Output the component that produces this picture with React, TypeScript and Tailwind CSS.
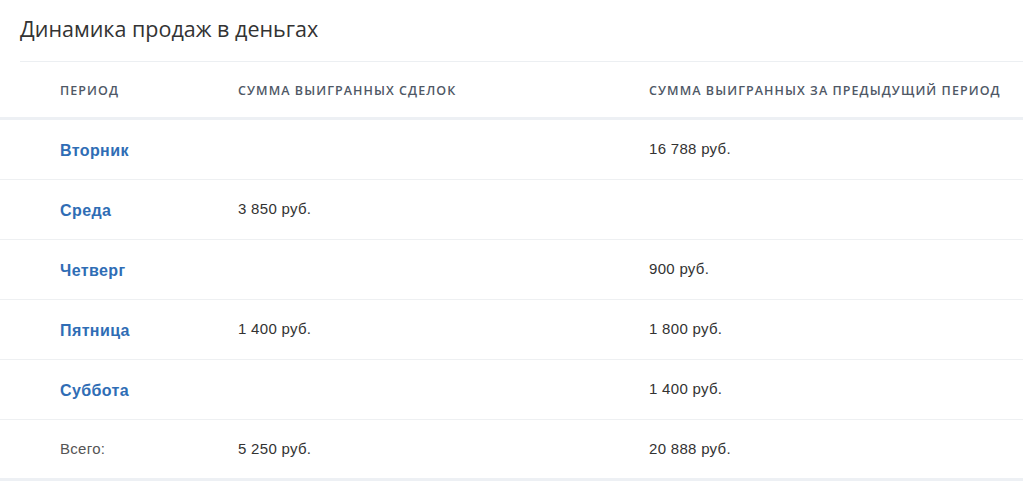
const rows = [
  { period: 'Вторник', current: '', previous: '16 788 руб.' },
  { period: 'Среда', current: '3 850 руб.', previous: '' },
  { period: 'Четверг', current: '', previous: '900 руб.' },
  { period: 'Пятница', current: '1 400 руб.', previous: '1 800 руб.' },
  { period: 'Суббота', current: '', previous: '1 400 руб.' },
]

export default function App() {
  return (
    <div className="w-[1023px] h-[481px] overflow-hidden bg-white">
      {/* Title */}
      <div className="pl-5 h-[61px] pt-[14px]">
        <h2 className="font-['Open_Sans',sans-serif] text-[21.5px] leading-[30px] text-[#333]">
          Динамика продаж в деньгах
        </h2>
      </div>
      <div className="ml-5 h-px bg-[#eceff2]" />

      {/* Table */}
      <div className="grid grid-cols-[238px_411px_1fr]">
        {/* Header */}
        <div className="contents font-['Open_Sans',sans-serif] text-[12.5px] font-semibold uppercase tracking-[0.085em] text-[#4f5866]">
          <div className="h-[58px] pl-[60px] pt-[3px] flex items-center border-b-[3px] border-[#edf0f4]">Период</div>
          <div className="h-[58px] pt-[3px] flex items-center border-b-[3px] border-[#edf0f4]">Сумма выигранных сделок</div>
          <div className="h-[58px] pt-[3px] flex items-center border-b-[3px] border-[#edf0f4]">Сумма выигранных за предыдущий период</div>
        </div>

        {rows.map(r => (
          <div key={r.period} className="contents font-['Liberation_Sans',Arial,sans-serif] text-[15px] tracking-[0.02em] text-[#333]">
            <div className="h-[60px] pl-[60px] pt-[3px] flex items-center border-b border-[#eef0f2]">
              <a href="#" className="text-[16px] font-bold tracking-[0.025em] text-[#2f6db5]">{r.period}</a>
            </div>
            <div className="h-[60px] flex items-center border-b border-[#eef0f2]">{r.current}</div>
            <div className="h-[60px] flex items-center border-b border-[#eef0f2]">{r.previous}</div>
          </div>
        ))}

        {/* Total */}
        <div className="contents font-['Liberation_Sans',Arial,sans-serif] text-[15px] tracking-[0.02em] text-[#333]">
          <div className="h-[61px] pl-[60px] flex items-center border-b-[3px] border-[#edf0f4] text-[#555]">Всего:</div>
          <div className="h-[61px] flex items-center border-b-[3px] border-[#edf0f4]">5 250 руб.</div>
          <div className="h-[61px] flex items-center border-b-[3px] border-[#edf0f4]">20 888 руб.</div>
        </div>
      </div>
    </div>
  )
}
